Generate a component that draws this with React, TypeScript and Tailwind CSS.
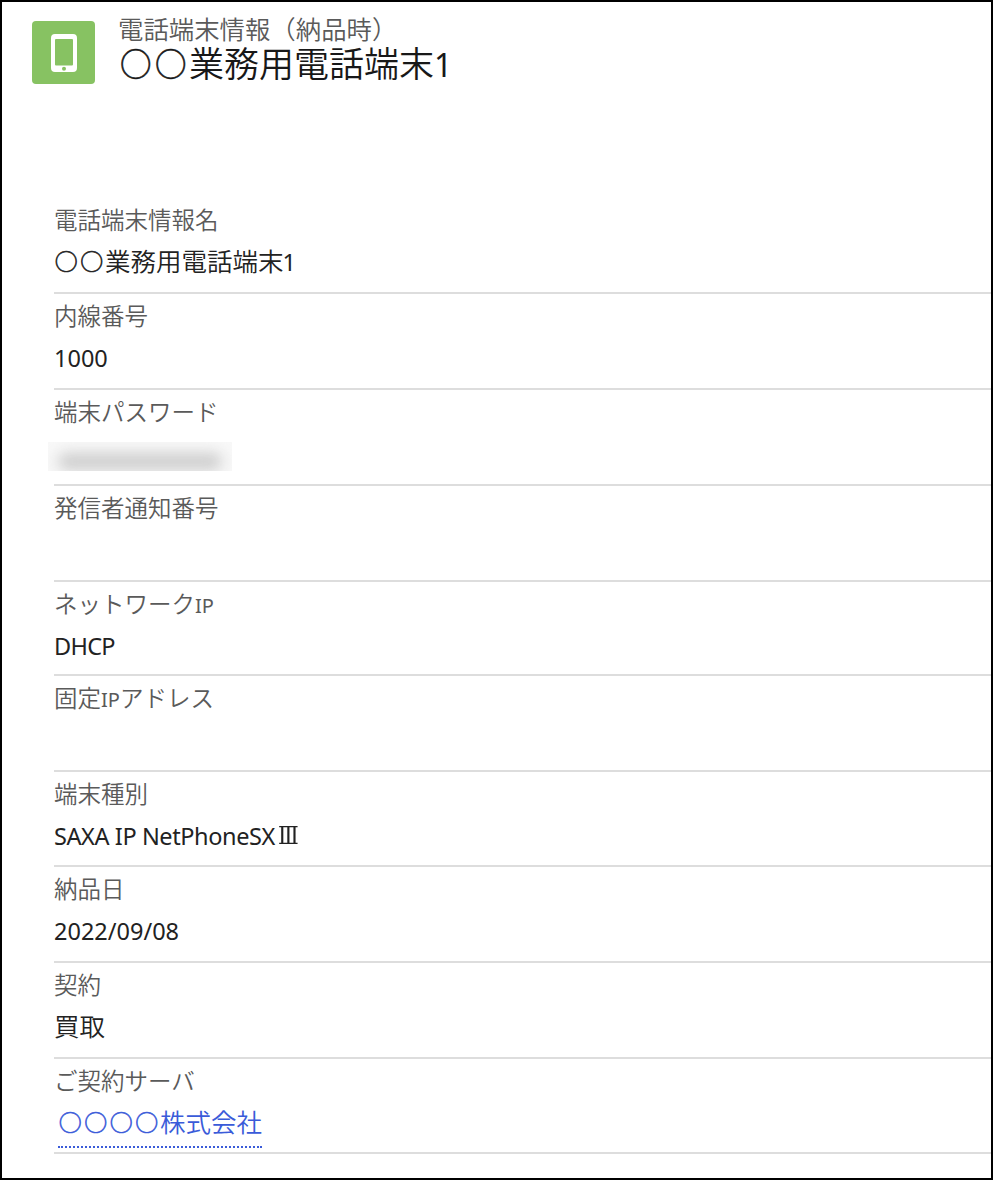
import { ReactNode } from "react";

type Field = {
  label: ReactNode;
  value?: ReactNode;
  height: string;
};

function SmallLatin({ children }: { children: ReactNode }) {
  return <span className="text-[20px] font-normal">{children}</span>;
}

function Latin({ children }: { children: ReactNode }) {
  return <span className="text-[23.5px] font-normal">{children}</span>;
}

function Circles({ children }: { children: ReactNode }) {
  return (
    <span className="ml-[0.03em] mr-[-0.03em] align-[0.03em] text-[0.9em] tracking-[0.111em] [-webkit-text-stroke:0.6px_currentColor]">
      {children}
    </span>
  );
}

function MaskedValue() {
  return (
    <div className="-ml-[6px] flex h-[38px] items-end">
      <div className="flex h-[29px] w-[184px] items-end overflow-hidden bg-[#f8f8f8] px-[10px] pb-px">
        <div className="h-[17px] w-full rounded-full bg-[#cdcdcd] blur-[7px]"></div>
      </div>
    </div>
  );
}

const fields: Field[] = [
  {
    label: "電話端末情報名",
    value: (
      <>
        <Circles>○○</Circles>業務用電話端末
        <span className="-ml-px">
          <Latin>1</Latin>
        </span>
      </>
    ),
    height: "h-24",
  },
  { label: "内線番号", value: <Latin>1000</Latin>, height: "h-24" },
  { label: "端末パスワード", value: <MaskedValue />, height: "h-24" },
  { label: "発信者通知番号", height: "h-24" },
  {
    label: (
      <>
        ネットワーク<SmallLatin>IP</SmallLatin>
      </>
    ),
    value: (
      <span className="-tracking-[0.7px]">
        <Latin>DHCP</Latin>
      </span>
    ),
    height: "h-[94px]",
  },
  {
    label: (
      <>
        固定<SmallLatin>IP</SmallLatin>アドレス
      </>
    ),
    height: "h-24",
  },
  {
    label: "端末種別",
    value: (
      <div className="flex">
        <span className="-tracking-[0.4px]">
          <Latin>SAXA IP NetPhoneSX</Latin>
        </span>
        <span className="ml-[3px] inline-block origin-left scale-x-[0.86] font-['DejaVu_Serif',serif] text-[25px] font-normal">
          Ⅲ
        </span>
      </div>
    ),
    height: "h-[95px]",
  },
  { label: "納品日", value: <Latin>2022/09/08</Latin>, height: "h-24" },
  { label: "契約", value: "買取", height: "h-24" },
  {
    label: "ご契約サーバ",
    value: (
      <a
        href="#"
        className="ml-1 inline-block h-[46px] border-b-2 border-dotted border-[#3a5bd9] text-[#3a5bd9]"
      >
        <Circles>○○○○</Circles>株式会社
      </a>
    ),
    height: "h-[95px]",
  },
];

function PhoneIcon() {
  return (
    <div className="flex h-[63px] w-[63px] items-center justify-center rounded-[4px] bg-[#87c262]">
      <svg width="26" height="38" viewBox="0 0 26 38">
        <path
          fill="#fff"
          fillRule="evenodd"
          d="M4 0h18a4 4 0 0 1 4 4v30a4 4 0 0 1-4 4H4a4 4 0 0 1-4-4V4a4 4 0 0 1 4-4Zm1 5a1 1 0 0 0-1 1v24.500a1 1 0 0 0 1 1h16a1 1 0 0 0 1-1V6a1 1 0 0 0-1-1H5Zm8 27.800a2 2 0 1 0 0 4 2 2 0 0 0 0-4Z"
        />
      </svg>
    </div>
  );
}

export default function App() {
  return (
    <div className="h-[1180px] w-[993px] overflow-hidden border-2 border-black bg-white font-['Noto_Sans','Noto_Sans_CJK_JP',sans-serif] font-[350] whitespace-nowrap">
      <header className="flex h-[196px] pt-[19px] pl-[30px]">
        <PhoneIcon />
        <div className="-mt-[6px] ml-[24px]">
          <p className="-ml-px h-[30px] text-[25.4px] leading-[29px] text-[#5a5a5a]">
            電話端末情報（納品時）
          </p>
          <h1 className="h-[38px] text-[35px] leading-[38px] text-[#181818]">
            <Circles>○○</Circles>業務用電話端末
            <span className="text-[32px] font-normal">1</span>
          </h1>
        </div>
      </header>

      <dl className="pl-[52px]">
        {fields.map((field, index) => (
          <div key={index} className={`${field.height} border-b-2 border-[#dddddd]`}>
            <dt className="h-[43px] pt-[5px] text-[23.5px] leading-[34px] text-[#5a5a5a]">
              {field.label}
            </dt>
            <dd className="h-[41px] text-[25.5px] leading-[41px] text-[#222]">
              {field.value}
            </dd>
          </div>
        ))}
      </dl>
    </div>
  );
}
